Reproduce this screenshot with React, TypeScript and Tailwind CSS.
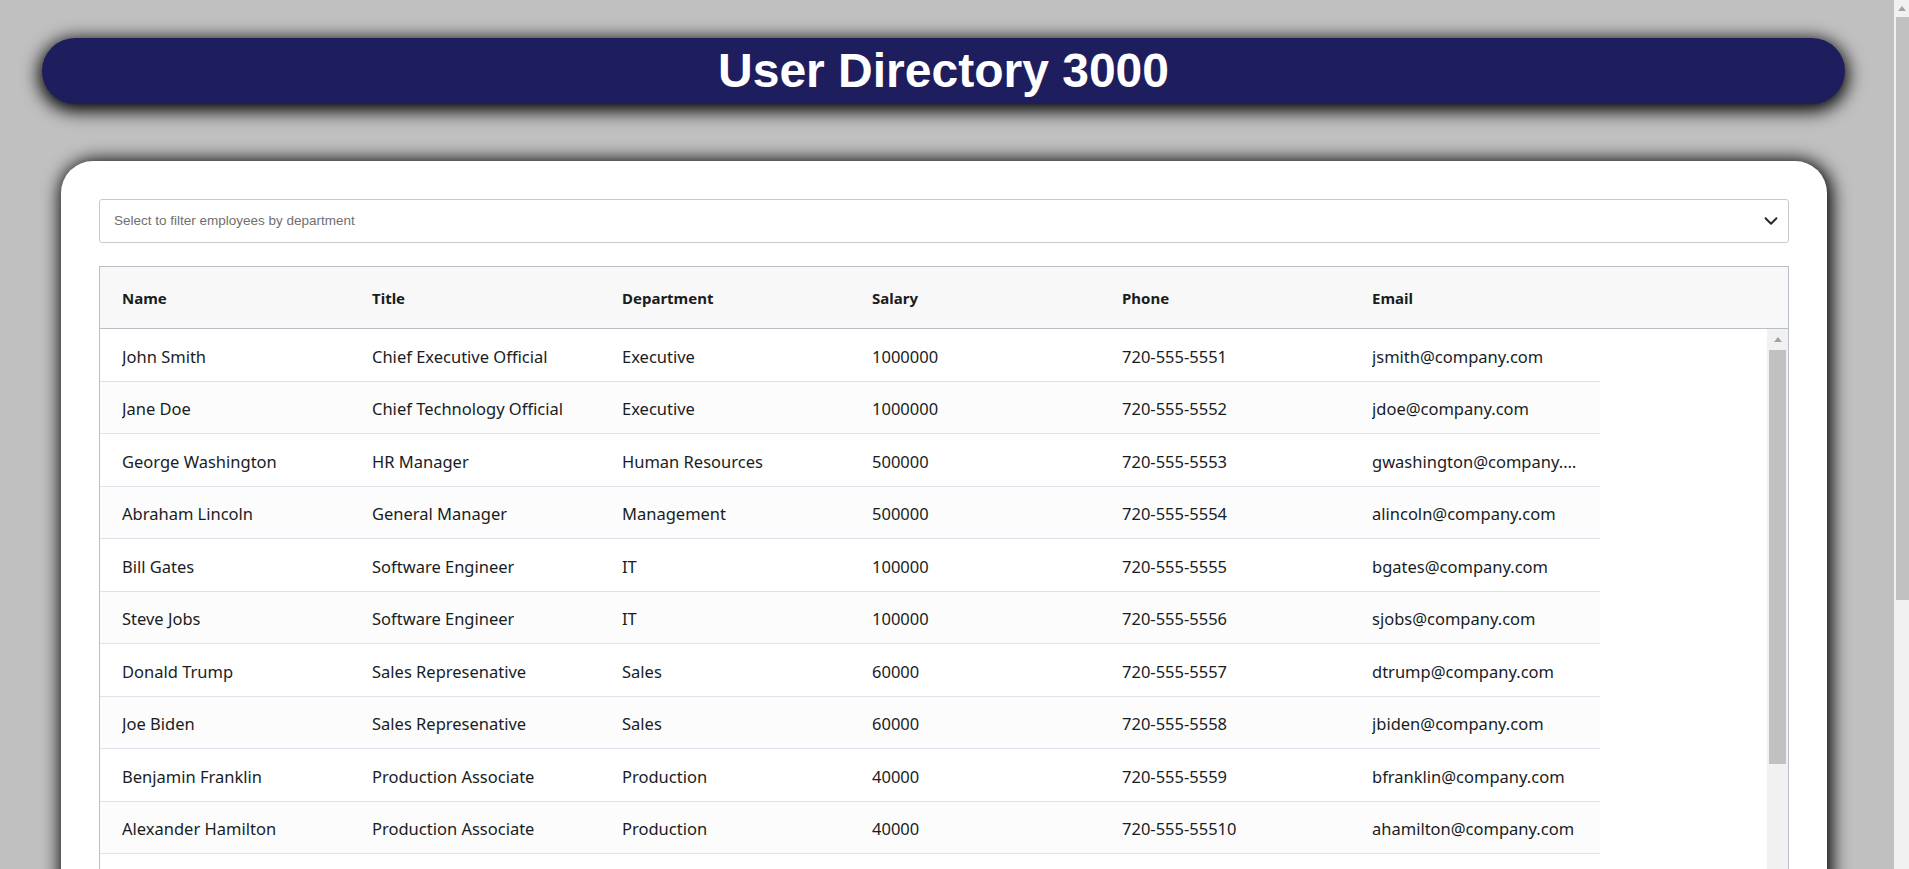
import React from 'react';
import { ChevronDown } from 'lucide-react';

const employees = [
  { name: 'John Smith', title: 'Chief Executive Official', department: 'Executive', salary: '1000000', phone: '720-555-5551', email: 'jsmith@company.com' },
  { name: 'Jane Doe', title: 'Chief Technology Official', department: 'Executive', salary: '1000000', phone: '720-555-5552', email: 'jdoe@company.com' },
  { name: 'George Washington', title: 'HR Manager', department: 'Human Resources', salary: '500000', phone: '720-555-5553', email: 'gwashington@company.com' },
  { name: 'Abraham Lincoln', title: 'General Manager', department: 'Management', salary: '500000', phone: '720-555-5554', email: 'alincoln@company.com' },
  { name: 'Bill Gates', title: 'Software Engineer', department: 'IT', salary: '100000', phone: '720-555-5555', email: 'bgates@company.com' },
  { name: 'Steve Jobs', title: 'Software Engineer', department: 'IT', salary: '100000', phone: '720-555-5556', email: 'sjobs@company.com' },
  { name: 'Donald Trump', title: 'Sales Represenative', department: 'Sales', salary: '60000', phone: '720-555-5557', email: 'dtrump@company.com' },
  { name: 'Joe Biden', title: 'Sales Represenative', department: 'Sales', salary: '60000', phone: '720-555-5558', email: 'jbiden@company.com' },
  { name: 'Benjamin Franklin', title: 'Production Associate', department: 'Production', salary: '40000', phone: '720-555-5559', email: 'bfranklin@company.com' },
  { name: 'Alexander Hamilton', title: 'Production Associate', department: 'Production', salary: '40000', phone: '720-555-55510', email: 'ahamilton@company.com' }
];

const columns = ['Name', 'Title', 'Department', 'Salary', 'Phone', 'Email'];

// scrollbar look-alike: track, up arrow, thumb
const Scrollbar = ({ width, arrowH, thumbH, inset }: { width: string; arrowH: string; thumbH: string; inset: string }) => (
  <div className={`${width} shrink-0 bg-[#f1f1f1] flex flex-col`}>
    <div className={`${arrowH} flex items-center justify-center`}>
      <div className="w-0 h-0 border-l-[4px] border-r-[4px] border-b-[5px] border-l-transparent border-r-transparent border-b-[#a3a3a3]" />
    </div>
    <div className={`${thumbH} ${inset} bg-[#c1c1c1]`} />
  </div>
);

const App = () => {
  return (
    <div className="min-h-screen bg-[#c0c0c0] flex">
      <div className="flex-1 min-w-0 pt-[38px] pb-[80px]">
        {/* Title bar */}
        <div className="ml-[42px] mr-[49px] h-[66px] rounded-full bg-[#1e1e5f] flex items-center justify-center shadow-[0_4px_18px_3px_#000]">
          <h1 className="text-white font-bold text-[48px] leading-none font-['Liberation_Sans',Arial,sans-serif]">
            User Directory 3000
          </h1>
        </div>

        {/* Card */}
        <div className="mt-[57px] ml-[61px] mr-[67px] rounded-[32px] bg-white p-[38px] shadow-[2px_2px_18px_3px_#000]">
          {/* Department filter */}
          <div className="h-[44px] border border-[#c9c9c9] rounded-[3px] flex items-center justify-between pl-[14px] pr-[6px]">
            <span className="text-[13.5px] text-[#6f6f6f] font-['Liberation_Sans',Arial,sans-serif]">
              Select to filter employees by department
            </span>
            <ChevronDown size={22} strokeWidth={2} className="text-[#222]" />
          </div>

          {/* Grid */}
          <div className="mt-[23px] border border-[#babfc7] font-['Noto_Sans',sans-serif] text-[#181d1f]">
            <div className="h-[62px] bg-[#f8f8f8] border-b border-[#babfc7] flex">
              {columns.map((col) => (
                <div key={col} className="w-[250px] px-[22px] pt-[2px] flex items-center text-[15px] font-bold">
                  {col}
                </div>
              ))}
            </div>
            <div className="h-[800px] flex">
              <div className="flex-1">
                {employees.map((e, index) => (
                  <div
                    key={e.email}
                    className={`w-[1500px] h-[52.5px] flex border-b border-[#dde2eb] text-[16.5px] ${index % 2 === 1 ? 'bg-[#fcfcfc]' : 'bg-white'}`}
                  >
                    {[e.name, e.title, e.department, e.salary, e.phone, e.email].map((v, i) => (
                      <div key={i} className="w-[250px] px-[22px] pt-[5px] flex items-center min-w-0">
                        <span className="truncate">{v}</span>
                      </div>
                    ))}
                  </div>
                ))}
              </div>
              <Scrollbar width="w-[21px]" arrowH="h-[21px]" thumbH="h-[414px]" inset="mx-[2px]" />
            </div>
          </div>
        </div>
      </div>

      {/* Page scrollbar */}
      <Scrollbar width="w-[15px]" arrowH="h-[17px]" thumbH="h-[583px]" inset="ml-[2px]" />
    </div>
  );
};

export default App;
